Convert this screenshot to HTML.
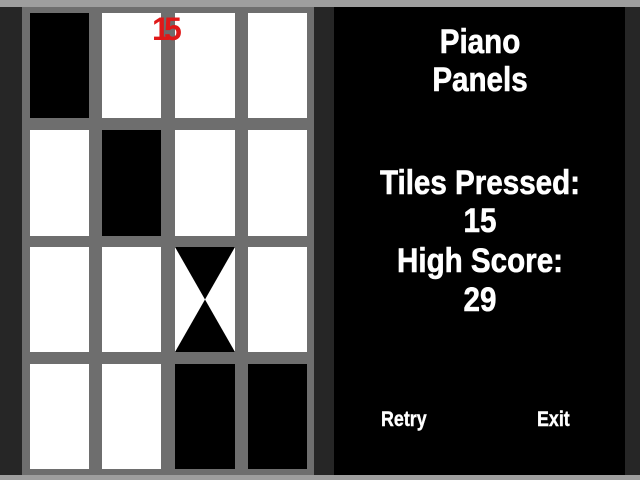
<!DOCTYPE html>
<html><head><style>
body{margin:0;width:640px;height:480px;overflow:hidden;background:#262626;position:relative;font-family:"Liberation Sans Narrow","Liberation Sans",sans-serif;font-weight:bold}
div{position:absolute}
.t{background:#fff}.b{background:#000}
.txt{color:#fff;left:334px;width:292px;text-align:center;font-size:34px;line-height:38px;transform:scaleX(0.87);transform-origin:center;-webkit-text-stroke:0.6px #fff}
</style></head><body>
<div style="left:0;top:0;width:640px;height:7px;background:#9e9e9e"></div>
<div style="left:0;top:475px;width:640px;height:5px;background:#9e9e9e"></div>
<div style="left:22px;top:7px;width:292px;height:468px;background:#6e6e6e"></div>
<div style="left:334px;top:7px;width:291px;height:468px;background:#000"></div>

<div class="b" style="left:30px;top:13px;width:59px;height:105px"></div>
<div class="t" style="left:102px;top:13px;width:59px;height:105px"></div>
<div class="t" style="left:175px;top:13px;width:60px;height:105px"></div>
<div class="t" style="left:248px;top:13px;width:59px;height:105px"></div>

<div class="t" style="left:30px;top:130px;width:59px;height:106px"></div>
<div class="b" style="left:102px;top:130px;width:59px;height:106px"></div>
<div class="t" style="left:175px;top:130px;width:60px;height:106px"></div>
<div class="t" style="left:248px;top:130px;width:59px;height:106px"></div>

<div class="t" style="left:30px;top:247px;width:59px;height:105px"></div>
<div class="t" style="left:102px;top:247px;width:59px;height:105px"></div>
<svg style="position:absolute;left:175px;top:247px" width="60" height="105"><rect width="60" height="105" fill="#fff"/><polygon points="0,0 60,0 30,52.5" fill="#000"/><polygon points="0,105 60,105 30,52.5" fill="#000"/></svg>
<div class="t" style="left:248px;top:247px;width:59px;height:105px"></div>

<div class="t" style="left:30px;top:364px;width:59px;height:105px"></div>
<div class="t" style="left:102px;top:364px;width:59px;height:105px"></div>
<div class="b" style="left:175px;top:364px;width:60px;height:105px"></div>
<div class="b" style="left:248px;top:364px;width:59px;height:105px"></div>

<div style="left:152px;top:12px;color:#e01818;font-size:32px;line-height:34px">1</div>
<div style="left:164px;top:12px;color:#e01818;font-size:32px;line-height:34px">5</div>

<div class="txt" style="top:23px">Piano</div>
<div class="txt" style="top:61px">Panels</div>
<div class="txt" style="top:164px">Tiles Pressed:</div>
<div class="txt" style="top:202px">15</div>
<div class="txt" style="top:242px">High Score:</div>
<div class="txt" style="top:281px">29</div>
<div style="left:381px;top:408px;color:#fff;font-size:21px;line-height:24px;transform:scaleX(0.85);transform-origin:left;-webkit-text-stroke:0.4px #fff">Retry</div>
<div style="left:537px;top:408px;color:#fff;font-size:21px;line-height:24px;transform:scaleX(0.85);transform-origin:left;-webkit-text-stroke:0.4px #fff">Exit</div>
</body></html>
